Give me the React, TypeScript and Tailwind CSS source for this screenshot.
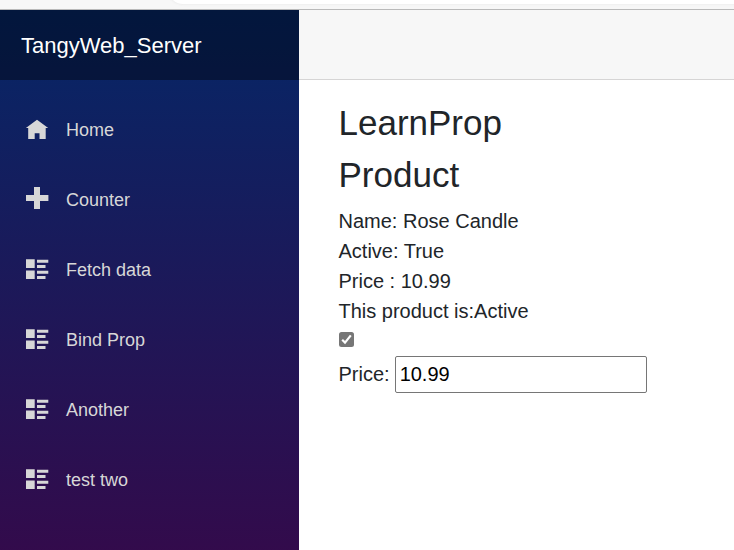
import React, { useState } from "react";

type IconName = "home" | "plus" | "list";

const links: { label: string; icon: IconName }[] = [
  { label: "Home", icon: "home" },
  { label: "Counter", icon: "plus" },
  { label: "Fetch data", icon: "list" },
  { label: "Bind Prop", icon: "list" },
  { label: "Another", icon: "list" },
  { label: "test two", icon: "list" },
];

function Icon({ name }: { name: IconName }) {
  return (
    <svg width="24" height="24" viewBox="0 0 24 24" fill="#d7d7d7" className="shrink-0 overflow-visible">
      {name === "home" && <path d="M12 1.7 L23.2 10 H20.7 V21 H14.5 V15.3 H9.7 V21 H3.2 V10 H0.9 Z" />}
      {name === "plus" && <path d="M9 -1h6v8h8.4v6H15v8H9v-8H1V7h8z" />}
      {name === "list" && (
        <path d="M1 1.2h8.7V10H1zM1 12.5h8.7V21H1zM12 1.7h11.3v3H12zM12 7h8.5v2.9H12zM12 12.7h11.3v3H12zM12 18h8.5v3H12z" />
      )}
    </svg>
  );
}

export default function App() {
  const [active, setActive] = useState(true);
  const [price, setPrice] = useState("10.99");

  return (
    <div className="flex h-[550px] w-[734px] flex-col overflow-hidden bg-white font-['Liberation_Sans',Arial,sans-serif] text-[20px] leading-[30px] text-[#212529]">
      <div className="h-[10px] shrink-0 overflow-hidden border-b border-[#b9b9b9] bg-[#f7f7f7] pl-[168px]">
        <div className="-mt-[26px] h-[30px] w-[620px] rounded-full bg-white shadow-[0_0_3px_#e4e4e4]" />
      </div>
      <div className="flex min-h-0 flex-1">
        <aside className="w-[299px] shrink-0 bg-[linear-gradient(180deg,rgb(5,39,103)_0px,#3a0647_630px)]">
          <div className="flex h-[70px] items-center bg-black/40 pt-[2px] pl-[21px] text-[22px] text-white">
            TangyWeb_Server
          </div>
          <nav className="flex flex-col gap-[10px] pt-[20px] pl-[25px] text-[18px] leading-[60px] text-[#d7d7d7]">
            {links.map((link) => (
              <a key={link.label} href="#" className="flex h-[60px] items-center gap-[17px]">
                <Icon name={link.icon} />
                <span>{link.label}</span>
              </a>
            ))}
          </nav>
        </aside>
        <main className="flex-1">
          <div className="h-[70px] border-b border-[#d6d5d5] bg-[#f7f7f7]" />
          <div className="pt-[22px] pl-[39.5px]">
            <h3 className="mb-[10px] text-[35px] leading-[42px]">LearnProp</h3>
            <h3 className="mb-[10px] text-[35px] leading-[42px]">Product</h3>
            <div>Name: Rose Candle</div>
            <div>Active: True</div>
            <div>Price : 10.99</div>
            <div>This product is:Active</div>
            <label className="relative mt-[6px] block h-[15px] w-[15px] rounded-[2.5px] bg-[#767676]">
              <input
                type="checkbox"
                checked={active}
                onChange={(e) => setActive(e.target.checked)}
                className="absolute inset-0 opacity-0"
              />
              {active && (
                <svg width="15" height="15" viewBox="0 0 15 15" fill="none" stroke="#fff" strokeWidth="2.2" className="block">
                  <path d="M3.2 7.8 L6 10.6 L11.8 3.4" />
                </svg>
              )}
            </label>
            <div className="mt-[9px] flex items-center gap-[5px]">
              <span className="-mt-[2px]">Price:</span>
              <input
                value={price}
                onChange={(e) => setPrice(e.target.value)}
                className="h-[37px] w-[252px] rounded-[2px] border border-[#767676] bg-white px-[4px] text-black outline-none"
              />
            </div>
          </div>
        </main>
      </div>
    </div>
  );
}
